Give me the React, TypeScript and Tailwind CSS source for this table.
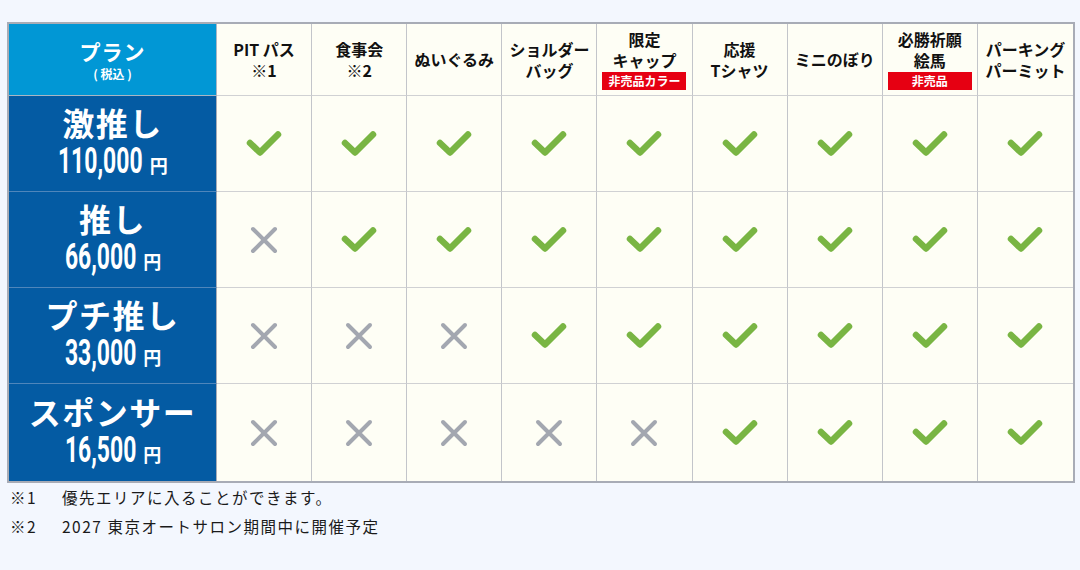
import React from "react";

const FONT = { fontFamily: '"Noto Sans CJK JP", "Noto Sans", sans-serif' };

type Item = { lines: string[]; badge?: string };
const items: Item[] = [
  { lines: ["PIT パス", "※1"] },
  { lines: ["食事会", "※2"] },
  { lines: ["ぬいぐるみ"] },
  { lines: ["ショルダー", "バッグ"] },
  { lines: ["限定", "キャップ"], badge: "非売品カラー" },
  { lines: ["応援", "Tシャツ"] },
  { lines: ["ミニのぼり"] },
  { lines: ["必勝祈願", "絵馬"], badge: "非売品" },
  { lines: ["パーキング", "パーミット"] },
];

const plans = [
  { name: "激推し", price: "110,000", mx: "-mx-[25px]", marks: [1, 1, 1, 1, 1, 1, 1, 1, 1] },
  { name: "推し", price: "66,000", mx: "-mx-[21px]", marks: [0, 1, 1, 1, 1, 1, 1, 1, 1] },
  { name: "プチ推し", price: "33,000", mx: "-mx-[21px]", marks: [0, 0, 0, 1, 1, 1, 1, 1, 1] },
  { name: "スポンサー", price: "16,500", mx: "-mx-[21px]", marks: [0, 0, 0, 0, 0, 1, 1, 1, 1] },
];

function Check() {
  return (
    <svg width="36" height="27" viewBox="0 0 36 27">
      <path d="M4 13 L14 22.5 L32 4.5" fill="none" stroke="#79b543" strokeWidth="6.5" strokeLinecap="round" strokeLinejoin="round" />
    </svg>
  );
}

function Cross() {
  return (
    <svg width="28" height="28" viewBox="0 0 28 28">
      <path d="M3 3 L25 25 M25 3 L3 25" fill="none" stroke="#a3a7b0" strokeWidth="4" strokeLinecap="round" />
    </svg>
  );
}

export default function App() {
  return (
    <div className="w-[1080px] h-[570px] bg-[#f3f7fe] pt-[22px] pl-[7px]" style={FONT}>
      <div className="w-[1068px] border-2 border-[#a8acb6] bg-[#fefef5]">
        <div className="grid grid-cols-[208px_repeat(9,minmax(0,1fr))]">
          <div className="h-[72px] bg-[#0197d5] border-r border-b border-[#a8b6c4] flex flex-col items-center justify-center text-white font-bold">
            <div className="text-[21px] leading-[26px] tracking-[1px]">プラン</div>
            <div className="text-[12px] leading-[16px] mt-[2px]">( 税込 )</div>
          </div>
          {items.map((it, i) => (
            <div
              key={i}
              className={`h-[72px] border-b border-[#d0d1d3] ${i < 8 ? "border-r border-r-[#c3c5ca]" : ""} flex flex-col items-center justify-center text-[#111] font-bold text-[16px] leading-[21px] text-center`}
            >
              {it.lines.map((l, j) => (
                <div key={j} className="whitespace-nowrap">{l}</div>
              ))}
              {it.badge && (
                <div className="mt-[1px] w-[84px] h-[18px] bg-[#e60012] text-white text-[12px] leading-[18px] font-bold">
                  {it.badge}
                </div>
              )}
            </div>
          ))}
          {plans.map((p, r) => (
            <React.Fragment key={r}>
              <div
                className={`${r === 3 ? "h-[97px]" : "h-[96px]"} bg-[#045ba3] border-r border-[#a8acb6] ${r < 3 ? "border-b border-b-[#4f86bb]" : ""} flex flex-col items-center justify-center text-white`}
              >
                <div className="text-[32px] leading-[34px] font-bold tracking-[1.5px]">{p.name}</div>
                <div className="flex items-baseline justify-center">
                  <span
                    className={`inline-block scale-x-[0.62] ${p.mx} text-[37px] leading-[44px] font-bold`}
                    style={{ fontFamily: "Roboto, sans-serif" }}
                  >
                    {p.price}
                  </span>
                  <span className="ml-[6px] text-[18px] leading-[20px] font-bold">円</span>
                </div>
              </div>
              {p.marks.map((m, c) => (
                <div
                  key={c}
                  className={`${r === 3 ? "h-[97px]" : "h-[96px]"} ${c < 8 ? "border-r border-r-[#c3c5ca]" : ""} ${r < 3 ? "border-b border-b-[#d0d1d3]" : ""} flex items-center justify-center`}
                >
                  {m ? <Check /> : <Cross />}
                </div>
              ))}
            </React.Fragment>
          ))}
        </div>
      </div>
      <div className="mt-[0px] text-[15.5px] text-[#1a1a1a] leading-[29px] tracking-[1.5px]">
        <div className="flex pl-[3px]">
          <span className="w-[52px]">※1</span>
          <span>優先エリアに入ることができます。</span>
        </div>
        <div className="flex pl-[3px]">
          <span className="w-[52px]">※2</span>
          <span>2027 東京オートサロン期間中に開催予定</span>
        </div>
      </div>
    </div>
  );
}
